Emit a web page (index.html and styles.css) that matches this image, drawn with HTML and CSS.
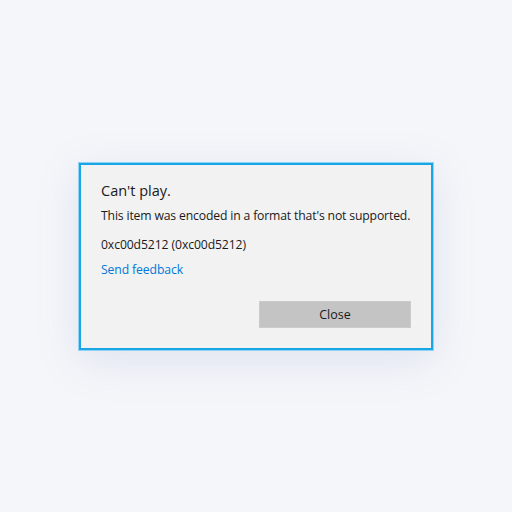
FILE: index.html
```html
<!DOCTYPE html>
<html lang="en">
<head>
  <meta charset="UTF-8">
  <title>Can't play</title>
  <link rel="stylesheet" href="styles.css">
</head>
<body>
  <div class="dialog">
    <div class="title">Can't play.</div>
    <div class="message">This item was encoded in a format that's not supported.</div>
    <div class="code">0xc00d5212 (0xc00d5212)</div>
    <a class="feedback" href="#">Send feedback</a>
    <div class="actions">
      <button class="close-btn">Close</button>
    </div>
  </div>
</body>
</html>
```

FILE: styles.css
```css
*, *::before, *::after {
  box-sizing: border-box;
}
html, body {
  height: 100%;
}
body {
  margin: 0;
  background: #f5f6fa;
  font-family: "Open Sans", "Noto Sans", sans-serif;
  color: #1a1a1a;
  display: flex;
  align-items: center;
  justify-content: center;
}
.dialog {
  width: 354px;
  height: 187px;
  background: #f2f2f2;
  border: 2px solid #1aa5e6;
  box-shadow: 0 0 0 1px #8fd3f5, 0 10px 40px rgba(120, 140, 190, 0.18);
  padding: 16px 20px 20px 20px;
  display: flex;
  flex-direction: column;
}
.title {
  font-size: 14.5px;
  line-height: 20px;
  margin-bottom: 6px;
}
.message {
  font-size: 12.2px;
  line-height: 18px;
  letter-spacing: -0.15px;
  white-space: nowrap;
  margin-bottom: 11px;
}
.code {
  font-size: 12.2px;
  line-height: 18px;
  letter-spacing: -0.1px;
  margin-bottom: 7px;
}
.feedback {
  font-size: 12.2px;
  line-height: 18px;
  letter-spacing: -0.1px;
  color: #0078d7;
  text-decoration: none;
  align-self: flex-start;
}
.actions {
  margin-top: auto;
  display: flex;
  justify-content: flex-end;
}
.close-btn {
  width: 152px;
  height: 27px;
  background: #c4c4c4;
  border: 1px solid #cbcbcb;
  font-family: inherit;
  font-size: 12.5px;
  color: #1a1a1a;
  padding: 0;
}
```
